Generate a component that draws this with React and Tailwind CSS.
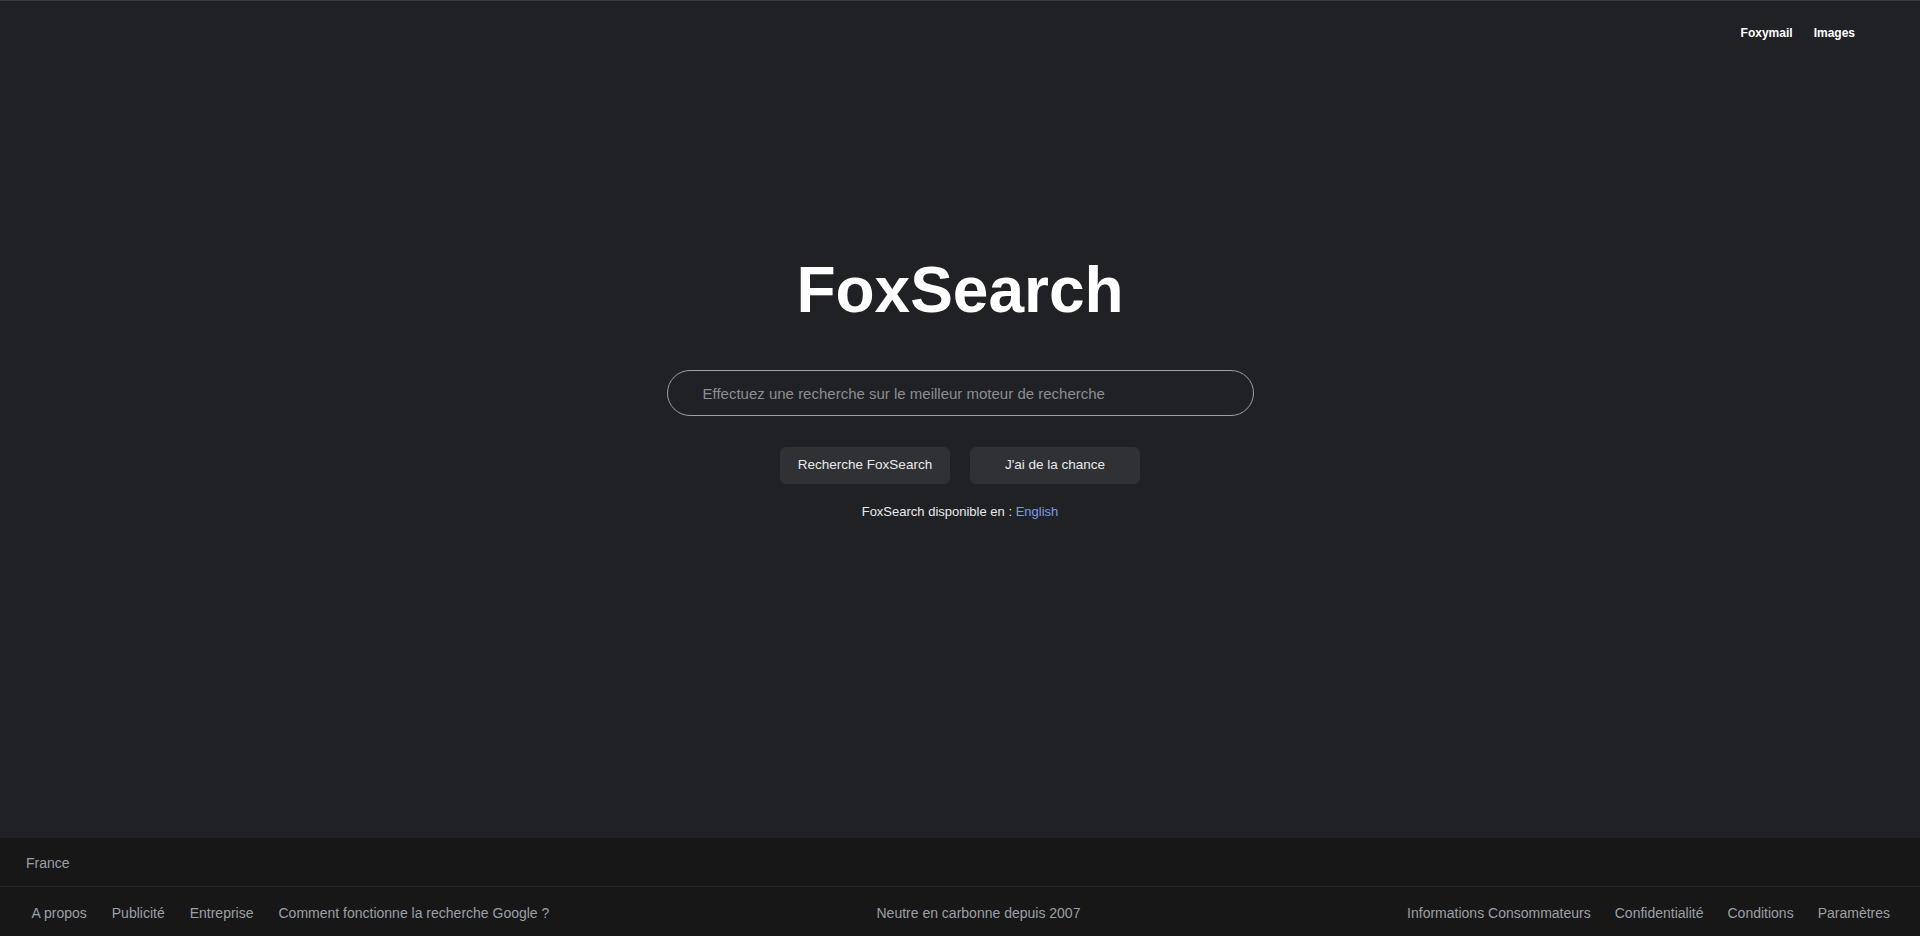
export default function App() {
  const leftLinks = ["A propos", "Publicité", "Entreprise", "Comment fonctionne la recherche Google ?"];
  const rightLinks = ["Informations Consommateurs", "Confidentialité", "Conditions", "Paramètres"];

  return (
    <div
      className="flex min-h-screen w-full flex-col bg-[#202124] border-t border-[#3c3d40] text-white"
      style={{ fontFamily: '"Liberation Sans", Arial, sans-serif' }}
    >
      {/* Header */}
      <header className="flex h-[63px] items-center justify-end gap-[21px] pr-[65px]">
        <a href="#" className="text-[12px] font-bold text-white">Foxymail</a>
        <a href="#" className="text-[12px] font-bold text-white">Images</a>
      </header>

      {/* Center */}
      <main className="flex flex-col items-center">
        <h1 className="mt-[194px] text-[64px] font-bold leading-[64px] text-white">FoxSearch</h1>

        <div className="mt-[48px] flex h-[46px] w-[587px] items-center rounded-full border border-[#9aa0a6] px-[35px] pt-[2px]">
          <input
            type="text"
            placeholder="Effectuez une recherche sur le meilleur moteur de recherche"
            className="w-full bg-transparent text-[15px] text-[#e8eaed] outline-none placeholder:text-[#8b8e92]"
          />
        </div>

        <div className="mt-[31px] flex gap-[20px]">
          <button className="h-[37px] w-[170px] rounded-[6px] bg-[#303134] text-[13.5px] text-[#e8eaed]">
            Recherche FoxSearch
          </button>
          <button className="h-[37px] w-[170px] rounded-[6px] bg-[#303134] text-[13.5px] text-[#e8eaed]">
            J'ai de la chance
          </button>
        </div>

        <p className="mt-[18px] text-[13px] leading-[20px] text-[#e8eaed]">
          FoxSearch disponible en : <a href="#" className="text-[#7a9ee6]">English</a>
        </p>
      </main>

      {/* Footer */}
      <footer className="mt-auto bg-[#171717] text-[14px] text-[#9aa0a6]">
        <div className="flex h-[49px] items-center border-b border-[#2a2a2a] px-[26px] pt-[2px]">France</div>
        <div className="flex h-[49px] items-center justify-between px-[18px] pt-[3px]">
          <div className="flex pl-[1px]">
            {leftLinks.map((l) => (
              <a key={l} href="#" className="px-[12.5px]">{l}</a>
            ))}
          </div>
          <span>Neutre en carbonne depuis 2007</span>
          <div className="flex">
            {rightLinks.map((l) => (
              <a key={l} href="#" className="px-3">{l}</a>
            ))}
          </div>
        </div>
      </footer>
    </div>
  );
}
